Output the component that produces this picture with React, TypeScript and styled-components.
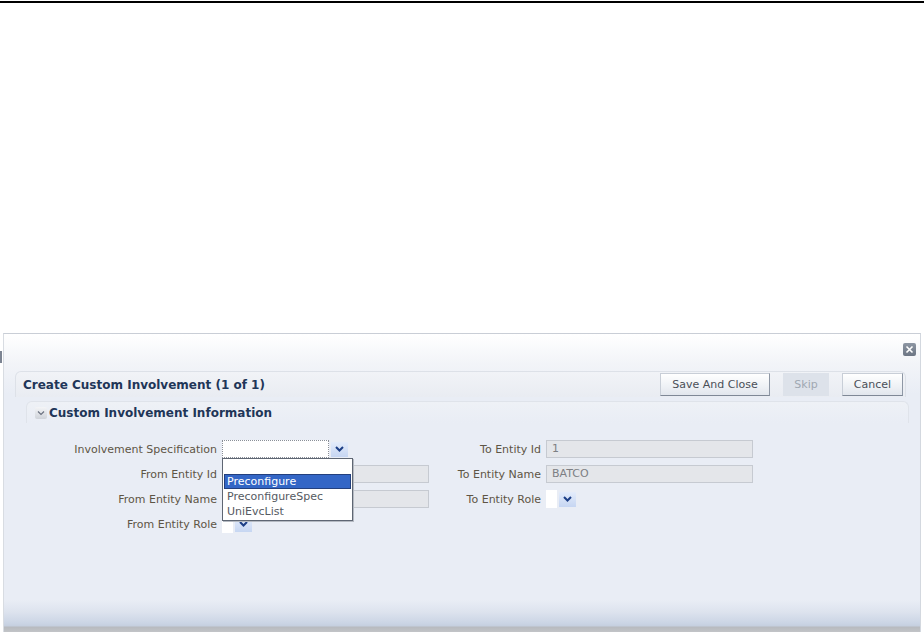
import React from "react";
import styled, { createGlobalStyle } from "styled-components";

const Global = createGlobalStyle`
  html, body { margin: 0; padding: 0; background: #ffffff; }
  body { width: 924px; height: 632px; overflow: hidden; font-family: "DejaVu Sans", "Liberation Sans", sans-serif; }
`;

const Page = styled.div`
  display: flex;
  flex-direction: column;
  width: 924px;
  height: 632px;
`;

const TopRule = styled.div`
  margin-top: 1px;
  height: 2px;
  background: #000;
`;

const Spacer = styled.div`
  height: 330px;
`;

const Panel = styled.div`
  position: relative;
  margin-left: 3px;
  width: 916px;
  flex: 1;
  display: flex;
  flex-direction: column;
  border-top: 1px solid #c9ced6;
  border-left: 1px solid #d8dce2;
  border-right: 1px solid #d3d8df;
  background: linear-gradient(
    to bottom,
    #ffffff 0px,
    #f2f4f8 30px,
    #e9edf5 60px,
    #e9edf5 266px,
    #dde3ee 278px,
    #cbd5e5 289px,
    #c5cfdf 292px,
    #b7babf 293px,
    #c4c6c9 299px
  );
`;

const LeftNotch = styled.div`
  position: absolute;
  left: -4px;
  top: 17px;
  width: 2px;
  height: 12px;
  background: #7c8492;
`;

const CloseRow = styled.div`
  height: 37px;
  display: flex;
  justify-content: flex-end;
  align-items: flex-start;
  padding: 9px 4px 0 0;
  box-sizing: border-box;
`;

const CloseBtn = styled.div`
  width: 13px;
  height: 13px;
  border-radius: 2px;
  background: linear-gradient(#8d96a3, #6d7684);
  display: flex;
  align-items: center;
  justify-content: center;
`;

const HeaderBar = styled.div`
  margin: 0 14px 0 11px;
  height: 26px;
  display: flex;
  align-items: center;
  border: 1px solid #dde1e8;
  border-bottom: none;
  border-radius: 6px 6px 0 0;
  background: linear-gradient(#f1f3f7, #e9ecf2);
  padding-left: 7px;
  padding-right: 2px;
  box-sizing: border-box;
`;

const Title = styled.div`
  flex: 1;
  font-family: "DejaVu Sans", sans-serif;
  font-weight: bold;
  font-size: 12px;
  color: #1f3658;
`;

const Buttons = styled.div`
  display: flex;
  gap: 13px;
  align-items: center;
`;

const Btn = styled.div<{ $w: number; $disabled?: boolean }>`
  width: ${(p) => p.$w}px;
  height: 23px;
  box-sizing: border-box;
  display: flex;
  align-items: center;
  justify-content: center;
  font-family: "DejaVu Sans", sans-serif;
  font-size: 11px;
  color: ${(p) => (p.$disabled ? "#a0a8b2" : "#4a4f57")};
  background: ${(p) =>
    p.$disabled ? "#dde2ea" : "linear-gradient(#ffffff, #eef1f5 60%, #e2e6ed)"};
  border: 1px solid ${(p) => (p.$disabled ? "#dde2ea" : "#c8ced7")};
  border-bottom-color: ${(p) => (p.$disabled ? "#dde2ea" : "#7f8896")};
  border-right-color: ${(p) => (p.$disabled ? "#dde2ea" : "#8e97a5")};
`;

const Section = styled.div`
  margin: 4px 11px 0 22px;
  height: 21px;
  display: flex;
  align-items: center;
  gap: 2px;
  border: 1px solid #dfe3ea;
  border-bottom: none;
  border-radius: 6px 6px 0 0;
  background: linear-gradient(#eef1f6, #e9edf5);
  padding-left: 8px;
`;

const Disclose = styled.div`
  width: 12px;
  height: 12px;
  background: linear-gradient(#f4f5f7, #cfd3d9);
  border-radius: 2px;
  display: flex;
  align-items: center;
  justify-content: center;
`;

const SectionTitle = styled.div`
  font-family: "DejaVu Sans", sans-serif;
  font-weight: bold;
  font-size: 12px;
  color: #1f3658;
`;

const Form = styled.div`
  display: flex;
  margin-top: 17px;
`;

const Column = styled.div<{ $labelW: number; $offset?: number }>`
  display: grid;
  grid-template-columns: ${(p) => p.$labelW}px auto;
  column-gap: 5px;
  row-gap: 7px;
  align-content: start;
  align-items: center;
  margin-left: ${(p) => p.$offset ?? 0}px;
`;

const Label = styled.div`
  text-align: right;
  font-family: "DejaVu Sans", sans-serif;
  font-size: 11px;
  color: #5e5545;
  white-space: nowrap;
`;

const ReadOnly = styled.div`
  width: 207px;
  height: 18px;
  box-sizing: border-box;
  background: #e4e6ea;
  border: 1px solid #c6cad1;
  font-family: "DejaVu Sans", sans-serif;
  font-size: 11px;
  color: #7d7f84;
  padding-left: 5px;
  line-height: 16px;
`;

const SelectWrap = styled.div`
  position: relative;
  display: flex;
  align-items: center;
  height: 18px;
`;

const SelectBox = styled.div<{ $w: number }>`
  width: ${(p) => p.$w}px;
  height: 18px;
  box-sizing: border-box;
  background: #ffffff;
  border: 1px dotted #8a8f98;
`;

const SmallBox = styled.div`
  width: 11px;
  height: 18px;
  background: #ffffff;
`;

const DropBtn = styled.div`
  width: 17px;
  height: 15px;
  margin-left: 2px;
  background: linear-gradient(#e4ecfb, #c6d6f2);
  display: flex;
  align-items: center;
  justify-content: center;
`;

const Listbox = styled.div`
  position: absolute;
  left: 0;
  top: 18px;
  width: 131px;
  box-sizing: border-box;
  border: 1px solid #5e6673;
  background: #ffffff;
  z-index: 2;
  padding: 0 0 1px 0;
  box-shadow: 1px 1px 0 #b5bac2;
`;

const Option = styled.div<{ $sel?: boolean }>`
  height: 15px;
  box-sizing: border-box;
  line-height: 13px;
  padding-left: 2px;
  font-family: "DejaVu Sans", sans-serif;
  font-size: 11px;
  color: ${(p) => (p.$sel ? "#ffffff" : "#555a62")};
  background: ${(p) => (p.$sel ? "#3366c6" : "transparent")};
  border: ${(p) => (p.$sel ? "1px solid #23407e" : "1px solid transparent")};
  margin: 0 1px;
`;

const Chevron = () => (
  <svg width="9" height="6" viewBox="0 0 9 6">
    <path d="M1 1 L4.5 4.5 L8 1" stroke="#1d3f86" strokeWidth="2" fill="none" />
  </svg>
);

const Dropdown = ({ small, open }: { small?: boolean; open?: boolean }) => (
  <SelectWrap>
    {small ? <SmallBox /> : <SelectBox $w={107} />}
    <DropBtn>
      <Chevron />
    </DropBtn>
    {open && (
      <Listbox>
        <Option>&nbsp;</Option>
        <Option $sel>Preconfigure</Option>
        <Option>PreconfigureSpec</Option>
        <Option>UniEvcList</Option>
      </Listbox>
    )}
  </SelectWrap>
);

export default function App() {
  return (
    <Page>
      <Global />
      <TopRule />
      <Spacer />
      <Panel>
        <LeftNotch />
        <CloseRow>
          <CloseBtn>
            <svg width="9" height="9" viewBox="0 0 9 9">
              <path d="M1.5 1.5 L7.5 7.5 M7.5 1.5 L1.5 7.5" stroke="#ffffff" strokeWidth="1.6" />
            </svg>
          </CloseBtn>
        </CloseRow>
        <HeaderBar>
          <Title>Create Custom Involvement (1 of 1)</Title>
          <Buttons>
            <Btn $w={110}>Save And Close</Btn>
            <Btn $w={46} $disabled>
              Skip
            </Btn>
            <Btn $w={61}>Cancel</Btn>
          </Buttons>
        </HeaderBar>
        <Section>
          <Disclose>
            <svg width="8" height="6" viewBox="0 0 8 6">
              <path d="M1 1.5 L4 4.5 L7 1.5" stroke="#6b7280" strokeWidth="1.2" fill="none" />
            </svg>
          </Disclose>
          <SectionTitle>Custom Involvement Information</SectionTitle>
        </Section>
        <Form>
          <Column $labelW={213}>
            <Label>Involvement Specification</Label>
            <Dropdown open />
            <Label>From Entity Id</Label>
            <ReadOnly />
            <Label>From Entity Name</Label>
            <ReadOnly />
            <Label>From Entity Role</Label>
            <Dropdown small />
          </Column>
          <Column $labelW={110} $offset={2}>
            <Label>To Entity Id</Label>
            <ReadOnly>1</ReadOnly>
            <Label>To Entity Name</Label>
            <ReadOnly>BATCO</ReadOnly>
            <Label>To Entity Role</Label>
            <Dropdown small />
          </Column>
        </Form>
      </Panel>
    </Page>
  );
}
